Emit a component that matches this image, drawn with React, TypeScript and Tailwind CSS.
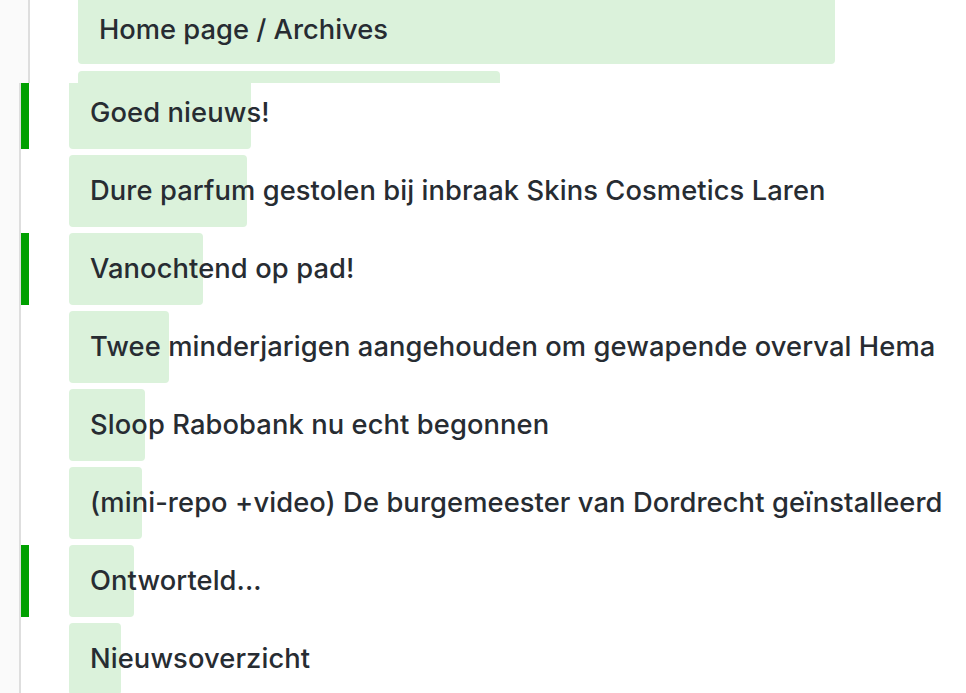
import React from "react";

const rows: { title: string; w: string; bar: boolean }[] = [
  { title: "Goed nieuws!", w: "w-[182px]", bar: true },
  { title: "Dure parfum gestolen bij inbraak Skins Cosmetics Laren", w: "w-[178px]", bar: false },
  { title: "Vanochtend op pad!", w: "w-[134px]", bar: true },
  { title: "Twee minderjarigen aangehouden om gewapende overval Hema", w: "w-[100px]", bar: false },
  { title: "Sloop Rabobank nu echt begonnen", w: "w-[76px]", bar: false },
  { title: "(mini-repo +video) De burgemeester van Dordrecht geïnstalleerd", w: "w-[73px]", bar: false },
  { title: "Ontworteld...", w: "w-[65px]", bar: true },
  { title: "Nieuwsoverzicht", w: "w-[52px]", bar: false },
];

export default function App() {
  return (
    <div
      className="w-[966px] h-[693px] overflow-hidden bg-white text-[#272c32] text-[27.3px] tracking-[0.1px] font-medium"
      style={{ fontFamily: "Inter, 'Noto Sans', sans-serif" }}
    >
      {/* top section */}
      <div className="flex h-[83px] overflow-hidden">
        <div className="w-[30px] shrink-0 bg-[#fafafa] border-r-2 border-[#dedede]" />
        <div className="flex flex-col gap-[7px] pl-[48px]">
          <div className="relative w-[757px] h-[64px] shrink-0 rounded-b bg-[#dbf2db]">
            <span className="absolute left-[21px] top-0 h-[60px] flex items-center whitespace-nowrap tracking-normal">
              Home page / Archives
            </span>
          </div>
          <div className="w-[422px] h-[20px] shrink-0 rounded-t bg-[#dbf2db]" />
        </div>
      </div>
      {/* list section */}
      <div className="flex h-[610px] overflow-hidden bg-white">
        <div className="w-[21px] shrink-0 bg-[#fafafa] border-r-2 border-[#dedede]" />
        <div className="flex flex-col gap-[6px] -mt-[6px]">
          {rows.map((r) => (
            <div key={r.title} className="flex h-[72px] shrink-0">
              <div className={r.bar ? "w-[8px] h-full bg-[#00a000]" : "w-[8px] h-full"} />
              <div className="relative ml-[40px] h-full">
                <div className={`${r.w} h-full rounded bg-[#dbf2db]`} />
                <span className="absolute left-[21px] top-0 h-full flex items-center whitespace-nowrap">
                  {r.title}
                </span>
              </div>
            </div>
          ))}
        </div>
      </div>
    </div>
  );
}
